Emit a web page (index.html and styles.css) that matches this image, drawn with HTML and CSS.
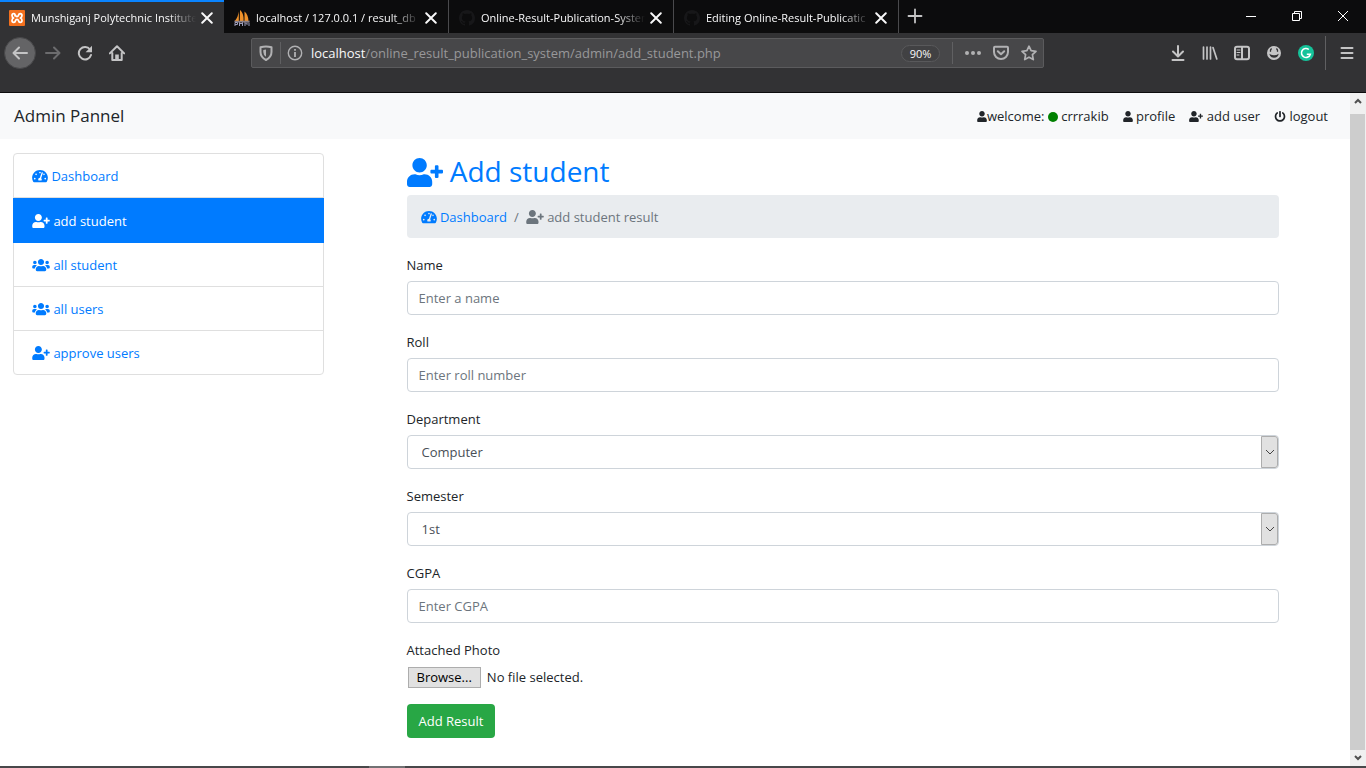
FILE: index.html
```html
<!DOCTYPE html>
<html lang="en">
<head>
<meta charset="utf-8">
<meta name="viewport" content="width=device-width, initial-scale=1">
<title>Munshiganj Polytechnic Institute</title>
<link rel="stylesheet" href="styles.css">
</head>
<body>
<svg class="sprite" aria-hidden="true">
  <symbol id="user" viewBox="0 0 448 512"><path d="M224 256c70.7 0 128-57.3 128-128S294.7 0 224 0 96 57.3 96 128s57.3 128 128 128zm89.6 32h-16.7c-22.2 10.2-46.9 16-72.9 16s-50.6-5.8-72.9-16h-16.7C60.2 288 0 348.2 0 422.4V464c0 26.5 21.5 48 48 48h352c26.5 0 48-21.5 48-48v-41.6c0-74.2-60.2-134.4-134.4-134.4z"/></symbol>
  <symbol id="user-plus" viewBox="0 0 640 512"><path d="M624 208h-64v-64c0-8.8-7.2-16-16-16h-32c-8.8 0-16 7.2-16 16v64h-64c-8.8 0-16 7.2-16 16v32c0 8.8 7.2 16 16 16h64v64c0 8.8 7.2 16 16 16h32c8.8 0 16-7.2 16-16v-64h64c8.8 0 16-7.2 16-16v-32c0-8.8-7.2-16-16-16zm-400 48c70.7 0 128-57.3 128-128S294.7 0 224 0 96 57.3 96 128s57.3 128 128 128zm89.6 32h-16.7c-22.2 10.2-46.9 16-72.9 16s-50.6-5.8-72.9-16h-16.7C60.2 288 0 348.2 0 422.4V464c0 26.5 21.5 48 48 48h352c26.5 0 48-21.5 48-48v-41.6c0-74.2-60.2-134.4-134.4-134.4z"/></symbol>
  <symbol id="users" viewBox="0 0 640 512"><path d="M96 224c35.3 0 64-28.7 64-64s-28.7-64-64-64-64 28.7-64 64 28.7 64 64 64zm448 0c35.3 0 64-28.7 64-64s-28.7-64-64-64-64 28.7-64 64 28.7 64 64 64zm32 32h-64c-17.6 0-33.5 7.1-45.1 18.6 40.3 22.1 68.9 62 75.1 109.4h66c17.7 0 32-14.3 32-32v-32c0-35.3-28.7-64-64-64zm-256 0c61.9 0 112-50.1 112-112S381.9 32 320 32 208 82.1 208 144s50.1 112 112 112zm76.8 32h-8.3c-20.8 10-43.9 16-68.5 16s-47.6-6-68.5-16h-8.3C179.6 288 128 339.6 128 403.2V432c0 26.5 21.5 48 48 48h288c26.5 0 48-21.5 48-48v-28.8c0-63.6-51.6-115.2-115.2-115.2zm-223.7-13.4C161.5 263.1 145.6 256 128 256H64c-35.3 0-64 28.7-64 64v32c0 17.7 14.3 32 32 32h65.9c6.3-47.4 34.9-87.3 75.2-109.4z"/></symbol>
  <symbol id="gauge" viewBox="0 0 576 512"><path d="M288 32C128.94 32 0 160.94 0 320c0 52.8 14.25 102.26 39.06 144.8 5.61 9.62 16.3 15.2 27.44 15.2h443c11.14 0 21.83-5.58 27.44-15.2C561.75 422.26 576 372.8 576 320c0-159.06-128.94-288-288-288zm0 64c14.71 0 26.58 10.13 30.32 23.65-1.11 2.26-2.64 4.23-3.45 6.67l-9.22 27.67c-5.13 3.49-10.97 6.01-17.64 6.01-17.67 0-32-14.33-32-32S270.33 96 288 96zM96 384c-17.67 0-32-14.33-32-32s14.33-32 32-32 32 14.33 32 32-14.33 32-32 32zm48-160c-17.67 0-32-14.33-32-32s14.33-32 32-32 32 14.33 32 32-14.33 32-32 32zm246.77-72.41l-61.33 184C343.13 347.33 352 364.54 352 384c0 11.72-3.38 22.55-8.88 32H232.88c-5.5-9.45-8.88-20.28-8.88-32 0-33.94 26.5-61.43 59.9-63.59l61.34-184.01c4.17-12.56 17.73-19.45 30.36-15.17 12.57 4.19 19.35 17.79 15.17 30.36zm14.66 57.2l15.52-46.55c3.47-1.29 7.13-2.23 11.05-2.23 17.67 0 32 14.33 32 32s-14.33 32-32 32c-11.38-.01-20.89-6.28-26.57-15.22zM480 384c-17.67 0-32-14.33-32-32s14.33-32 32-32 32 14.33 32 32-14.33 32-32 32z"/></symbol>
  <symbol id="power" viewBox="0 0 512 512"><path d="M400 54.1c63 45 104 118.6 104 201.9 0 136.8-110.8 247.7-247.5 248C120 504.3 8.2 393 8 256.4 7.9 173.1 48.9 99.3 111.8 54.2c11.7-8.3 28-4.8 35 7.7L162.6 90c5.9 10.5 3.1 23.8-6.6 31-41.5 30.8-68 79.6-68 134.9-.1 92.3 74.5 168.1 168 168.1 91.6 0 168.6-74.2 168-169.1-.3-51.8-24.7-101.8-68.1-134-9.7-7.2-12.4-20.5-6.5-30.9l15.8-28.1c7-12.4 23.2-16.1 34.8-7.8zM296 264V24c0-13.3-10.7-24-24-24h-32c-13.3 0-24 10.7-24 24v240c0 13.3 10.7 24 24 24h32c13.3 0 24-10.7 24-24z"/></symbol>
  <symbol id="octocat" viewBox="0 0 16 16"><path d="M8 0C3.58 0 0 3.58 0 8c0 3.54 2.29 6.53 5.47 7.59.4.07.55-.17.55-.38 0-.19-.01-.82-.01-1.49-2.01.37-2.53-.49-2.69-.94-.09-.23-.48-.94-.82-1.13-.28-.15-.68-.52-.01-.53.63-.01 1.08.58 1.23.82.72 1.21 1.87.87 2.33.66.07-.52.28-.87.51-1.07-1.78-.2-3.64-.89-3.64-3.95 0-.87.31-1.59.82-2.15-.08-.2-.36-1.02.08-2.12 0 0 .67-.21 2.2.82.64-.18 1.32-.27 2-.27s1.36.09 2 .27c1.53-1.04 2.2-.82 2.2-.82.44 1.1.16 1.92.08 2.12.51.56.82 1.27.82 2.15 0 3.07-1.87 3.75-3.65 3.95.29.25.54.73.54 1.48 0 1.07-.01 1.93-.01 2.2 0 .21.15.46.55.38A8.01 8.01 0 0 0 16 8c0-4.42-3.58-8-8-8z"/></symbol>
  <symbol id="close" viewBox="0 0 10 10"><path d="M1 1l8 8M9 1L1 9" fill="none" stroke="currentColor" stroke-width="1.6" stroke-linecap="round"/></symbol>
</svg>

<header class="browser">
  <div class="tabstrip">
    <div class="tab tab-active">
      <svg class="favicon" viewBox="0 0 16 16"><rect width="16" height="16" rx="1" fill="#f3701e"/><path d="M6 6.500V4.300Q5.500 3.700 4.800 3.700 3 3.700 3 5.600T4.600 8Q3 8.600 3 10.400t1.800 1.900q1.400 0 1.600-1.500Q7 9.400 8 9.400t1.600 1.400q.2 1.500 1.600 1.500 1.800 0 1.800-1.900T11.400 8Q13 7.400 13 5.600t-1.800-1.900q-1.400 0-1.600 1.500Q9 6.600 8 6.600T6.400 5.200" fill="none" stroke="#fff" stroke-width="1.700" stroke-linejoin="round"/></svg>
      <span class="tab-title">Munshiganj Polytechnic Institute</span>
      <button class="tab-close" aria-label="Close tab"><svg><use href="#close"/></svg></button>
    </div>
    <div class="tab">
      <svg class="favicon" viewBox="0 0 16 16"><path d="M4.800 1.500v9.500H.8C3 8.500 4.300 5 4.800 1.500zM6 0c3 2.500 4 7 3.500 11H5.800zM10.500 1.500c2.600 2 3.800 5.500 4 9.500h-4z" fill="#f0922a"/><path d="M0 10.800h16l-1 1.700H1z" fill="#8a7f86"/><path d="M1 16v-3.500h2.500v2H1M5.500 16v-3.500L7 14l1.500-1.500V16M11 16v-3.500l2 2v-2M15 12.500V16" fill="none" stroke="#9c9cba"/></svg>
      <span class="tab-title">localhost / 127.0.0.1 / result_db</span>
      <button class="tab-close" aria-label="Close tab"><svg><use href="#close"/></svg></button>
    </div>
    <div class="tab">
      <svg class="favicon octocat"><use href="#octocat"/></svg>
      <span class="tab-title">Online-Result-Publication-System</span>
      <button class="tab-close" aria-label="Close tab"><svg><use href="#close"/></svg></button>
    </div>
    <div class="tab">
      <svg class="favicon octocat"><use href="#octocat"/></svg>
      <span class="tab-title">Editing Online-Result-Publicatic</span>
      <button class="tab-close" aria-label="Close tab"><svg><use href="#close"/></svg></button>
    </div>
    <button class="tool" aria-label="New tab"><svg viewBox="0 0 16 16" class="line"><path d="M8 1.500v13M1.500 8h13" stroke-width="1.800"/></svg></button>
    <div class="window-controls">
      <button aria-label="Minimize"><svg viewBox="0 0 10 10"><path d="M0 5.500h10"/></svg></button>
      <button aria-label="Restore"><svg viewBox="0 0 10 10"><path d="M.5 2.500h7v7h-7zM2.500 2.500v-2h7v7h-2"/></svg></button>
      <button aria-label="Close"><svg viewBox="0 0 10 10"><path d="M0 0l10 10M10 0L0 10"/></svg></button>
    </div>
  </div>

  <div class="toolbar">
    <button class="tool back" aria-label="Back"><svg viewBox="0 0 16 16" class="line"><path d="M15 8H2M7 2.500L1.500 8 7 13.500"/></svg></button>
    <button class="tool dim" aria-label="Forward"><svg viewBox="0 0 16 16" class="line"><path d="M1 8h13M9 2.500L14.500 8 9 13.500"/></svg></button>
    <button class="tool" aria-label="Reload"><svg viewBox="0 0 16 16" class="line"><path d="M13 4.500A6.200 6.200 0 1 0 14 10"/><path d="M15 .8v6.400H8.600z" fill="currentColor" stroke="none"/></svg></button>
    <button class="tool" aria-label="Home"><svg viewBox="0 0 16 16" class="line"><path d="M.8 8.400L8 1.300l7.200 7.100M3.300 8v7h9.400V8"/><path d="M6.200 9.500h3.600V15H6.200z" fill="currentColor" stroke="none"/></svg></button>
    <div class="spacer"></div>
    <div class="urlbar">
      <svg viewBox="0 0 16 16" class="line shield"><path d="M2.500 2.300Q8 .5 13.500 2.300V7q0 5-5.500 8-5.500-3-5.500-8z"/><path d="M8 4.500v7.300Q5.300 10 5.300 7V5z" fill="currentColor" stroke="none"/></svg>
      <span class="divider"></span>
      <svg viewBox="0 0 16 16" class="line info"><circle cx="8" cy="8" r="6.700" stroke-width="1.400"/><path d="M8 7v5M8 4v1.800" stroke-width="1.800" stroke-linecap="butt"/></svg>
      <span class="address" role="textbox" aria-label="Address"><b>localhost</b>/online_result_publication_system/admin/add_student.php</span>
      <button class="zoom">90%</button>
      <span class="divider"></span>
      <button class="url-tool" aria-label="Page actions"><svg viewBox="0 0 16 16"><g fill="currentColor"><circle cx="2" cy="8" r="2"/><circle cx="8" cy="8" r="2"/><circle cx="14" cy="8" r="2"/></g></svg></button>
      <button class="url-tool" aria-label="Save to Pocket"><svg viewBox="0 0 16 16" class="line"><path d="M2 1.800h12q1 0 1 1V7a7 7 0 0 1-14 0V2.800q0-1 1-1zM4.800 6.200L8 9.300l3.200-3.100"/></svg></button>
      <button class="url-tool" aria-label="Bookmark"><svg viewBox="0 0 16 16" class="line"><path d="M8 1.200l2.100 4.500 4.900.6-3.600 3.400.9 4.900L8 12.200l-4.300 2.400.9-4.900L1 6.300l4.900-.6z" stroke-width="1.700"/></svg></button>
    </div>
    <div class="spacer"></div>
    <button class="tool" aria-label="Downloads"><svg viewBox="0 0 16 16" class="line"><path d="M8 1v9.500M3 6.500l5 5 5-5M2.500 15h11"/></svg></button>
    <button class="tool" aria-label="Library"><svg viewBox="0 0 16 16" class="line"><path d="M1.500 2v12M5 2v12M8.500 2v12M11 2.500L14.800 14" stroke-width="1.700"/></svg></button>
    <button class="tool" aria-label="Sidebars"><svg viewBox="0 0 16 16" class="line"><rect x="1" y="1.800" width="14" height="12.400" rx="2"/><path d="M8 2v12"/><path d="M3 5h3M3 7.500h3M3 10h2" stroke-width="1"/></svg></button>
    <button class="tool" aria-label="Account"><svg viewBox="0 0 16 16"><circle cx="8" cy="8" r="7" fill="currentColor"/><path d="M5.600 3.500Q4 5 4.600 6.800M10.400 3.500Q12 5 11.400 6.800" fill="none" stroke="#323234" stroke-width="1.300"/><path d="M3.300 8.800q4.700 3 9.400 0-.7 3.900-4.700 3.900T3.300 8.800z" fill="#323234"/></svg></button>
    <button class="tool" aria-label="Grammarly"><svg viewBox="0 0 16 16"><circle cx="8" cy="8" r="8" fill="#15c39a"/><path d="M10.800 4.500A4.500 4.500 0 1 0 12.300 9.200H8.800" fill="none" stroke="#fff" stroke-width="1.600"/></svg></button>
    <span class="divider divider-tall"></span>
    <button class="tool" aria-label="Menu"><svg viewBox="0 0 16 16" class="line"><path d="M2.500 3h11M2.500 8h11M2.500 13h11"/></svg></button>
  </div>
</header>

<div class="viewport">
  <div class="page">
    <nav class="navbar">
      <a class="brand" href="#">Admin Pannel</a>
      <div class="nav-links">
        <a href="#" class="welcome"><svg class="icon icon-user"><use href="#user"/></svg>welcome: <span class="online"></span> crrrakib</a>
        <a href="#"><svg class="icon icon-user"><use href="#user"/></svg> profile</a>
        <a href="#"><svg class="icon icon-wide"><use href="#user-plus"/></svg> add user</a>
        <a href="#"><svg class="icon"><use href="#power"/></svg> logout</a>
      </div>
    </nav>

    <div class="layout">
      <aside class="sidebar">
        <nav class="list">
          <a href="#"><svg class="icon icon-gauge"><use href="#gauge"/></svg> Dashboard</a>
          <a href="#" class="active"><svg class="icon icon-wide"><use href="#user-plus"/></svg> add student</a>
          <a href="#"><svg class="icon icon-wide"><use href="#users"/></svg> all student</a>
          <a href="#"><svg class="icon icon-wide"><use href="#users"/></svg> all users</a>
          <a href="#"><svg class="icon icon-wide"><use href="#user-plus"/></svg> approve users</a>
        </nav>
      </aside>

      <main class="main">
        <h1 class="title"><svg><use href="#user-plus"/></svg> Add student</h1>
        <nav class="breadcrumb" aria-label="Breadcrumb">
          <a href="#"><svg class="icon icon-gauge"><use href="#gauge"/></svg> Dashboard</a>
          <span>/</span>
          <span><svg class="icon icon-wide"><use href="#user-plus"/></svg> add student result</span>
        </nav>
        <form class="form">
          <div class="field">
            <label for="name">Name</label>
            <input class="control" id="name" type="text" placeholder="Enter a name">
          </div>
          <div class="field">
            <label for="roll">Roll</label>
            <input class="control" id="roll" type="text" placeholder="Enter roll number">
          </div>
          <div class="field">
            <label for="department">Department</label>
            <div class="select">
              <select class="control" id="department"><option>Computer</option></select>
              <span class="arrow"><svg viewBox="0 0 10 6"><path d="M1 1l4 4 4-4"/></svg></span>
            </div>
          </div>
          <div class="field">
            <label for="semester">Semester</label>
            <div class="select">
              <select class="control" id="semester"><option>1st</option></select>
              <span class="arrow"><svg viewBox="0 0 10 6"><path d="M1 1l4 4 4-4"/></svg></span>
            </div>
          </div>
          <div class="field">
            <label for="cgpa">CGPA</label>
            <input class="control" id="cgpa" type="text" placeholder="Enter CGPA">
          </div>
          <div class="field">
            <label for="photo">Attached Photo</label>
            <label class="file">
              <input id="photo" type="file">
              <span class="browse">Browse...</span>
              <span>No file selected.</span>
            </label>
          </div>
          <button class="submit" type="submit">Add Result</button>
        </form>
      </main>
    </div>
  </div>

  <div class="scrollbar" aria-hidden="true">
    <span class="scroll-end"><svg viewBox="0 0 8 6"><path d="M1 5l3-3 3 3"/></svg></span>
    <span class="thumb"></span>
    <span class="scroll-end"><svg viewBox="0 0 8 6"><path d="M1 1l3 3 3-3"/></svg></span>
  </div>
</div>

<footer class="taskbar"><span></span></footer>
</body>
</html>
```

FILE: styles.css
```css
* {
  box-sizing: border-box;
}

body {
  margin: 0;
  min-height: 100vh;
  display: flex;
  flex-direction: column;
  background: #fff;
  color: #212529;
  font: 13px/22px "Open Sans", "Noto Sans", sans-serif;
}

button,
input,
select {
  font: inherit;
}

a {
  color: #007bff;
  text-decoration: none;
}

.sprite {
  position: absolute;
  width: 0;
  height: 0;
}

/* Browser window */

.browser {
  background: #323234;
  border-bottom: 1px solid #0c0c0d;
  color: #f9f9fa;
}

.browser button {
  border: 0;
  padding: 0;
  background: none;
  color: inherit;
}

.line {
  fill: none;
  stroke: currentColor;
  stroke-width: 2;
  stroke-linecap: round;
  stroke-linejoin: round;
}

.tabstrip {
  display: flex;
  height: 33px;
  background: #0c0c0d;
}

.tab {
  display: flex;
  align-items: center;
  flex: 0 1 225px;
  min-width: 0;
  padding: 2px 11px 0 10px;
  border-right: 1px solid #4a4a4d;
  font-size: 11px;
}

.tab-active {
  padding: 0 11px 0 9px;
  flex-basis: 224px;
  border-right: 0;
  border-top: 2px solid #0a84ff;
  background: #323234;
}

.favicon {
  flex: none;
  width: 16px;
  height: 16px;
  margin-right: 6px;
}

.octocat {
  fill: #171719;
}

.tab-title {
  flex: 1;
  overflow: hidden;
  white-space: nowrap;
  -webkit-mask-image: linear-gradient(to left, transparent, #000 28px);
  mask-image: linear-gradient(to left, transparent, #000 28px);
}

.tab-close {
  display: flex;
  flex: none;
  margin-left: 5px;
}

.tab-close svg {
  width: 12px;
  height: 12px;
}

.browser .tool {
  display: flex;
  flex: none;
  align-items: center;
  justify-content: center;
  width: 32px;
  height: 32px;
  color: #c4c4c5;
}

.tool svg {
  width: 16px;
  height: 16px;
}

.window-controls {
  display: flex;
  margin-left: auto;
}

.window-controls button {
  width: 46px;
  height: 32px;
  display: flex;
  align-items: center;
  justify-content: center;
}

.window-controls svg {
  width: 10px;
  height: 10px;
  fill: none;
  stroke: #fff;
}

.toolbar {
  display: flex;
  align-items: center;
  height: 59px;
  padding: 0 3px 19px 4px;
}

.toolbar .back {
  margin-right: 1px;
  border: 1px solid #474749;
  border-radius: 50%;
  background: #646466;
}

.toolbar .dim {
  color: #6c6c6e;
}

.spacer {
  flex: 118;
}

.urlbar {
  display: flex;
  align-items: center;
  flex: 786;
  min-width: 0;
  height: 30px;
  padding-left: 6px;
  border: 1px solid #5b5b5d;
  border-radius: 2px;
  background: #474749;
  color: #b1b1b3;
}

.urlbar svg {
  flex: none;
  width: 16px;
  height: 16px;
}

.urlbar .info {
  margin: 0 8px 0 6px;
}

.shield {
  margin-right: 6px;
}

.divider {
  width: 1px;
  height: 22px;
  background: #606062;
}

.divider-tall {
  height: 34px;
  margin: 0 5px 0 3px;
}

.address {
  flex: 1;
  overflow: hidden;
  white-space: nowrap;
  color: #98989a;
}

.address b {
  font-weight: 400;
  color: #f9f9fa;
}

.urlbar .zoom {
  width: 39px;
  height: 17px;
  margin-right: 12px;
  border: 1px solid #59595b;
  border-radius: 9px;
  background: #414143;
  color: #f9f9fa;
  font-size: 11px;
  line-height: 15px;
}

.url-tool {
  display: flex;
  flex: none;
  justify-content: center;
  width: 28px;
}

.divider + .url-tool {
  margin-left: 6px;
}

/* Page */

.viewport {
  flex: 1;
  display: flex;
}

.page {
  flex: 1;
  min-width: 0;
}

.icon {
  width: 14px;
  height: 14px;
  fill: currentColor;
  vertical-align: -2px;
}

.icon-user {
  width: 12px;
}

.icon-gauge {
  width: 16px;
}

.icon-wide {
  width: 18px;
}

.navbar {
  display: flex;
  align-items: center;
  justify-content: space-between;
  height: 46px;
  padding: 0 22px 0 14px;
  background: #f8f9fa;
}

.navbar a {
  color: #212529;
}

.navbar .brand {
  font-size: 17px;
}

.nav-links {
  display: flex;
  gap: 14px;
}

.nav-links .icon {
  width: 12px;
  height: 11px;
  vertical-align: -1px;
}

.nav-links .icon-user {
  width: 10px;
}

.nav-links .icon-wide {
  width: 14px;
}

.online {
  display: inline-block;
  width: 10px;
  height: 10px;
  border-radius: 50%;
  background: #008000;
  vertical-align: -1px;
}

.layout {
  display: grid;
  grid-template-columns: 1fr 3fr;
  padding-top: 14px;
}

.sidebar {
  padding: 0 14px 0 13px;
}

.list {
  display: flex;
  flex-direction: column;
  border: 1px solid #dfdfdf;
  border-radius: 4px;
}

.list a {
  padding: 11px 18px 10px;
  border-bottom: 1px solid #dfdfdf;
}

.list a:last-child {
  border-bottom: 0;
}

.list .active {
  margin: 0 -1px;
  padding: 12px 19px 10px;
  border-color: #007bff;
  background: #007bff;
  color: #fff;
}

.main {
  padding: 0 71px 28px 69px;
}

.title {
  margin: 0 0 6px;
  color: #007bff;
  font-size: 28px;
  font-weight: 400;
  line-height: 36px;
}

.title svg {
  width: 36px;
  height: 29px;
  fill: currentColor;
  vertical-align: -5px;
}

.breadcrumb {
  display: flex;
  gap: 7px;
  margin-bottom: 16px;
  padding: 11px 14px 10px;
  border-radius: 4px;
  background: #e9ecef;
  color: #6c757d;
}

.form {
  display: flex;
  flex-direction: column;
  align-items: flex-start;
  gap: 16px;
}

.field {
  display: flex;
  flex-direction: column;
  gap: 5px;
  width: 100%;
}

.control {
  display: block;
  width: 100%;
  height: 34px;
  padding: 0 11px;
  border: 1px solid #ced4da;
  border-radius: 4px;
  background: #fff;
  color: #495057;
}

.control::placeholder {
  color: #6c757d;
}

.select {
  position: relative;
}

.select .control {
  appearance: none;
  padding-left: 14px;
}

.arrow {
  position: absolute;
  top: 1px;
  right: 1px;
  bottom: 1px;
  display: flex;
  align-items: center;
  justify-content: center;
  width: 17px;
  border: 1px solid #adadad;
  border-radius: 0 3px 3px 0;
  background: #e1e1e1;
  pointer-events: none;
}

.arrow svg {
  width: 10px;
  height: 6px;
  fill: none;
  stroke: #444;
}

.file {
  display: flex;
  align-items: flex-end;
  gap: 6px;
  padding-left: 1px;
}

.file input {
  position: absolute;
  width: 1px;
  height: 1px;
  opacity: 0;
}

.browse {
  padding: 0 8px;
  border: 1px solid #adadad;
  background: #e1e1e1;
  color: #000;
  line-height: 19px;
}

.submit {
  height: 34px;
  padding: 0 12px;
  border: 0;
  border-radius: 4px;
  background: #28a745;
  color: #fff;
}

/* Scroll bar and the edge of the hidden taskbar */

.scrollbar {
  display: flex;
  flex-direction: column;
  width: 16px;
  background: #f0f0f0;
}

.scroll-end {
  display: flex;
  align-items: center;
  justify-content: center;
  height: 16px;
}

.scroll-end svg {
  width: 8px;
  height: 6px;
  fill: none;
  stroke: #505050;
  stroke-width: 2;
}

.thumb {
  flex: 1;
  margin: 5px 1px 0 0;
  background: #cdcdcd;
}

.taskbar {
  height: 2px;
  padding-left: 369px;
  background: #48484a;
}

.taskbar span {
  display: block;
  width: 36px;
  height: 2px;
  background: #727274;
}
```
